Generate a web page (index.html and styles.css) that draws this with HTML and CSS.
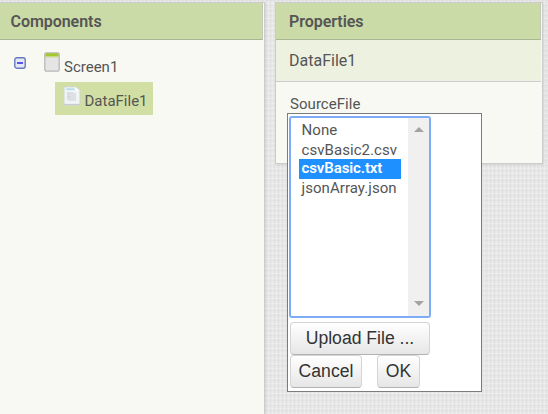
FILE: index.html
```html
<!DOCTYPE html>
<html lang="en">
<head>
<meta charset="utf-8">
<title>Designer</title>
<link rel="stylesheet" href="styles.css">
</head>
<body>
<main class="workspace">
  <section class="panel components">
    <h2 class="panel-title">Components</h2>
    <div class="tree">
      <div class="tree-row">
        <svg class="toggle" width="12" height="12" viewBox="0 0 12 12"><rect x=".8" y=".8" width="10.4" height="10.4" rx="2" fill="#e4e8f5" stroke="#6878c0" stroke-width="1.4"/><path d="M3 6h6" stroke="#1818dc" stroke-width="1.4"/></svg>
        <svg class="screen-icon" width="16" height="20" viewBox="0 0 16 20"><rect x=".8" y=".8" width="14.4" height="18.4" rx="1.6" fill="#e5e5e5" stroke="#b8b8b8" stroke-width="1.3"/><path d="M1.5 1.2h13v3h-13z" fill="#a5c832"/><path d="M1.5 4.2h13v1.2h-13z" fill="#c2d77e"/></svg>
        <span class="tree-label">Screen1</span>
      </div>
      <div class="tree-row selected">
        <svg class="file-icon" width="18" height="20" viewBox="0 0 18 20"><path d="M2 .8h10.8L17 4.5v13.7q0 1-1 1H2q-1 0-1-1V1.8q0-1 1-1z" fill="#f1f4f5" stroke="#cdd4d0"/><path d="M3.5 3.2h8" stroke="#b5dbe7" stroke-width="1.8"/><path d="M12.5 1v3.8h4z" fill="#fff"/><path d="M4 6h6l1 1h2v8H6l-2-3z" fill="#dde1e5"/><path d="M4 8h3M4 10.5h4M4 13h3" stroke="#cdd3d9" stroke-width=".8"/><path d="M1.5 18.4h15" stroke="#c4c8cb"/></svg>
        <span class="tree-label">DataFile1</span>
      </div>
    </div>
  </section>
  <section class="panel properties">
    <h2 class="panel-title">Properties</h2>
    <div class="component-name">DataFile1</div>
    <div class="property-body">
      <div class="property-label">SourceFile</div>
      <div class="chooser">
        <div class="listbox">
          <ul class="options">
            <li>None</li>
            <li>csvBasic2.csv</li>
            <li class="active">csvBasic.txt</li>
            <li>jsonArray.json</li>
          </ul>
          <div class="scrollbar"><i class="arrow up"></i><i class="arrow down"></i></div>
        </div>
        <button class="button upload">Upload File ...</button>
        <div class="actions"><button class="button cancel">Cancel</button><button class="button ok">OK</button></div>
      </div>
    </div>
  </section>
</main>
</body>
</html>
```
FILE: styles.css
```css
* { box-sizing: border-box; }
body {
  margin: 0;
  height: 414px;
  overflow: hidden;
  font: 15px/20px Roboto, sans-serif;
  color: #555;
  background-color: #e6e6e6;
  background-image:
    repeating-linear-gradient(0deg, rgba(255,255,255,.22) 0 1px, transparent 1px 3px, rgba(190,190,190,.1) 3px 4px, transparent 4px 5px),
    repeating-linear-gradient(90deg, rgba(255,255,255,.22) 0 1px, transparent 1px 2px, rgba(190,190,190,.1) 2px 3px, transparent 3px 4px);
}
.workspace {
  display: flex;
  align-items: flex-start;
  gap: 10px;
  padding-top: 2px;
}
.panel {
  background: #f8f9f3;
  border: 1px solid #ccc;
  box-shadow: 1px 1px 2px rgba(0,0,0,.08);
}
.components { width: 265px; height: 420px; border-left: 0; border-right-width: 1px; padding-right: 1px; }
.properties { width: 268px; height: 162px; padding-right: 1px; }
.panel-title {
  margin: 0;
  height: 37px;
  padding: 1px 13px 0;
  font-size: 16px;
  line-height: 36px;
  font-weight: 600;
  letter-spacing: -.05px;
  color: #555;
  background: #cbdba7;
  border-bottom: 1px solid #a9b696;
  border-right: 1px solid #c3c9b7;
}
.components .panel-title { padding-left: 10.5px; }
.tree { padding: 12px 0 0 13px; }
.tree-row { display: flex; height: 30px; }
.toggle { margin: 5px 18px 0 1px; }
.screen-icon { margin-right: 4px; }
.tree-row .tree-label { padding-top: 5px; }
.tree-row.selected {
  width: 98px;
  height: 33px;
  margin-left: 42px;
  padding: 4px 0 0 8px;
  background: #d2dfa4;
}
.selected .file-icon { margin-right: 3.5px; }
.component-name {
  height: 42px;
  padding-left: 13px;
  font-size: 16px;
  line-height: 41px;
  background: #edf1e0;
  border-bottom: 1px solid #ccc;
}
.property-body { position: relative; padding: 12px 14px; }
.property-label { line-height: 20px; letter-spacing: .05px; }
.chooser {
  position: absolute;
  top: 31px;
  left: 11px;
  width: 195px;
  height: 279px;
  padding: 2px 1px;
  background: #fff;
  border: 1px solid #7c7c7c;
}
.listbox {
  display: flex;
  justify-content: space-between;
  width: 142px;
  height: 202px;
  border: 2px solid #7eabf5;
  border-radius: 3px;
}
.options {
  width: 102px;
  margin: 2px 0 0 8px;
  padding: 0;
  list-style: none;
}
.options li { height: 19.5px; padding-left: 2.5px; line-height: 20px; letter-spacing: .06px; }
.options .active { height: 20px; line-height: 18px; color: #fff; font-weight: 600; letter-spacing: -.1px; background: #1e90ff; }
.options .active + li { line-height: 18.5px; }
.scrollbar {
  display: flex;
  flex-direction: column;
  justify-content: space-between;
  align-items: center;
  width: 21px;
  padding: 9px 0 10px;
  background: #f0f0f0;
}
.arrow { border: 5px solid transparent; }
.up { border-top: 0; border-bottom-color: #a3a3a3; }
.down { border-bottom: 0; border-top-color: #a3a3a3; }
.button {
  display: block;
  height: 33px;
  margin: 0;
  padding: 0;
  font: 17.6px/30px "Liberation Sans", Arial, sans-serif;
  color: #333;
  background: linear-gradient(#fff, #e6e6e6);
  border: 1px solid #d4d4d4;
  border-bottom-color: #b3b3b3;
  border-radius: 4px;
}
.upload { width: 140px; margin: 4px 0 0 1px; padding-bottom: 2px; }
.actions { display: flex; gap: 15px; margin-left: 1px; }
.actions .button { padding-bottom: 2px; }
.cancel { width: 72px; }
.ok { width: 43px; }
```
